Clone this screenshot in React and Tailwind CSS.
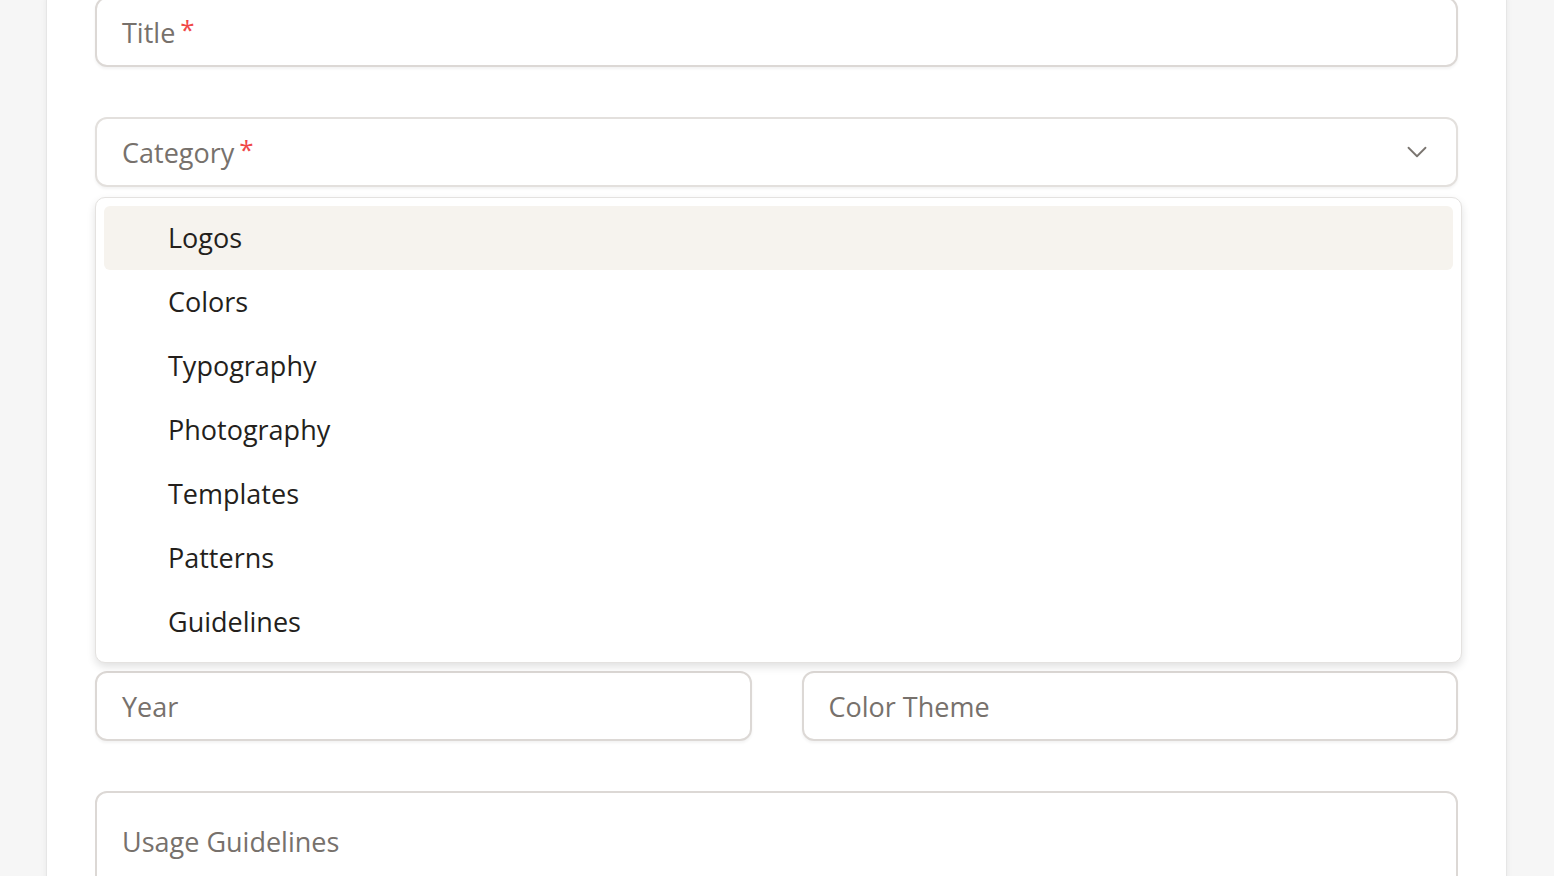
import React from 'react';
import { ChevronDown } from 'lucide-react';

const font = { fontFamily: '"Open Sans", Lato, sans-serif' };

const categories = ['Logos', 'Colors', 'Typography', 'Photography', 'Templates', 'Patterns', 'Guidelines'];

const Label = ({ text, required }) => (
  <span className="text-[27px] leading-none text-[#77716c]">
    {text}
    {required && <span className="relative -top-[4px] ml-[5px] text-[#f04848] text-[26px]">*</span>}
  </span>
);

const Field = ({ label, required, className = '' }) => (
  <div
    className={`h-[70px] rounded-[12px] border-2 border-[#dcd8d5] bg-white flex items-center px-[25px] shadow-[0_2px_3px_rgba(0,0,0,0.05)] ${className}`}
  >
    <Label text={label} required={required} />
  </div>
);

export default function App() {
  return (
    <div className="min-h-[876px] bg-[#f6f6f6] overflow-hidden" style={font}>
      <div className="ml-[46px] mr-[47px] min-h-[900px] bg-white border-x border-[#e6e6e6] shadow-[0_0_6px_rgba(0,0,0,0.06)] px-[48px] -mt-[3px]">
        <div className="flex flex-col">
          <Field label="Title" required />

          <div className="mt-[50px] relative">
            <div className="h-[70px] rounded-[12px] border-2 border-[#e3e0dd] bg-white flex items-center justify-between pl-[25px] pr-[22px] shadow-[0_2px_3px_rgba(0,0,0,0.05)]">
              <Label text="Category" required />
              <ChevronDown size={34} strokeWidth={1.3} className="text-[#7a7570]" />
            </div>

            {/* open listbox */}
            <div className="mt-[10px] mr-[-4px] rounded-[10px] border border-[#e4e2e0] bg-white p-2 shadow-[0_4px_8px_rgba(0,0,0,0.12)]">
              {categories.map((c, i) => (
                <div
                  key={c}
                  className={`h-16 flex items-center pl-[64px] rounded-[6px] text-[27px] text-[#241f1c] ${i === 0 ? 'bg-[#f6f3ee]' : ''}`}
                >
                  {c}
                </div>
              ))}
            </div>
          </div>

          <div className="mt-[8px] grid grid-cols-2 gap-[50px]">
            <Field label="Year" />
            <Field label="Color Theme" />
          </div>

          <div className="mt-[50px] h-[160px] rounded-[12px] border-2 border-[#dcd8d5] bg-white px-[25px] pt-[35px]">
            <Label text="Usage Guidelines" />
          </div>
        </div>
      </div>
    </div>
  );
}
